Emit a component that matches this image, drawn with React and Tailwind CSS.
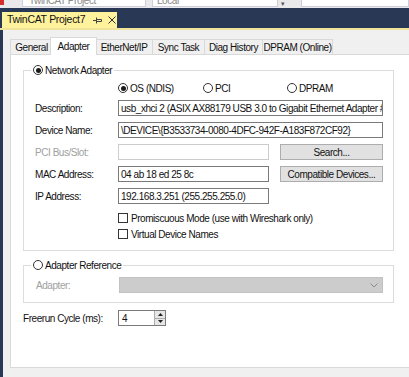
import { useState } from 'react'

const tabs = [
  { name: 'General', w: 'w-[42px]' },
  { name: 'Adapter', w: 'w-[47px]' },
  { name: 'EtherNet/IP', w: 'w-[57px]' },
  { name: 'Sync Task', w: 'w-[52px]' },
  { name: 'Diag History', w: 'w-[58px]' },
  { name: 'DPRAM (Online)', w: 'w-[71px]' },
]

function Radio({ checked }) {
  return (
    <span className="flex h-[10px] w-[10px] shrink-0 items-center justify-center rounded-full border border-[#333] bg-white">
      {checked && <span className="h-[5px] w-[5px] rounded-full bg-[#1a1a1a]" />}
    </span>
  )
}

function Check() {
  return <span className="h-[10px] w-[10px] shrink-0 border border-[#333] bg-white" />
}

function Row({ label, disabled, children }) {
  return (
    <div className="mt-[6px] flex h-[16px] items-center">
      <span className={`w-[83px] shrink-0 ${disabled ? 'text-[#a0a0a0]' : ''}`}>{label}</span>
      {children}
    </div>
  )
}

function TextBox({ value, wide, disabled }) {
  return (
    <div
      className={`flex h-[16px] min-w-0 items-center overflow-hidden whitespace-nowrap border bg-white pl-[2px] ${
        wide ? 'flex-1' : 'w-[151px] shrink-0'
      } ${disabled ? 'border-[#cccccc]' : 'border-[#7a7a7a]'}`}
    >
      {value}
    </div>
  )
}

function Button({ children }) {
  return (
    <button className="ml-auto flex h-[16px] w-[103px] shrink-0 items-center justify-center whitespace-nowrap border border-[#adadad] bg-[#e1e1e1]">
      {children}
    </button>
  )
}

export default function App() {
  const [active, setActive] = useState('Adapter')
  const [mode, setMode] = useState('os')

  return (
    <div className="h-[377px] w-[409px] overflow-hidden bg-[#f0f0f0] font-['Liberation_Sans',Arial,sans-serif] text-[10px] tracking-[-0.45px] text-[#111]">
      {/* toolbar (cut off) */}
      <div className="flex h-[8px] overflow-hidden bg-[#e9e9ec]">
        <div className="h-[5px] w-[4px] shrink-0 bg-[#d4302b]" />
        <div className="ml-[18px] mt-[-10px] flex h-[17px] w-[124px] shrink-0 items-end border border-[#cccedb] bg-white pl-[6px] leading-[11px] text-[#8a8a8a]">
          TwinCAT Project
        </div>
        <div className="ml-[6px] mt-[-10px] flex h-[17px] w-[126px] shrink-0 items-end border border-[#cccedb] bg-white pl-[4px] leading-[11px] text-[#8a8a8a]">
          Local
        </div>
        <div className="ml-[3px] mt-[1px] text-[7px] leading-[6px] text-[#555]">▾</div>
        <div className="ml-[16px] mt-[-10px] h-[17px] flex-1 border border-[#cccedb] bg-white" />
      </div>

      {/* document well */}
      <div className="flex h-[20px] items-end bg-[#293955]">
        <div className="ml-[2px] flex h-[16px] w-[115px] items-center whitespace-nowrap bg-[#fff29d] pl-[5px]">
          <span className="text-[10.5px] tracking-[-0.3px]">TwinCAT Project7</span>
          <svg className="ml-[8px]" width="9" height="7" viewBox="0 0 9 7" fill="none" stroke="#444">
            <path d="M0 3.5H3M3.5 0.5V6.5M3.5 2.5H8.5V4.5H3.5" />
          </svg>
          <svg className="ml-[6px]" width="8" height="8" viewBox="0 0 8 8" fill="none" stroke="#333">
            <path d="M0.5 0.5L7.5 7.5M7.5 0.5L0.5 7.5" />
          </svg>
        </div>
      </div>
      <div className="h-[2px] bg-[#efe49a]" />

      <div className="flex h-[347px]">
        <div className="w-[3px] shrink-0 bg-[#293955]" />
        <div className="flex min-w-0 flex-1 flex-col">
          {/* tabs */}
          <div className="mt-[7px] flex h-[17px] items-end pl-[7px]">
            {tabs.map((t, i) => {
              const sel = t.name === active
              return (
                <button
                  key={t.name}
                  onClick={() => setActive(t.name)}
                  className={`flex shrink-0 items-center justify-center whitespace-nowrap border-[#d9d9d9] ${t.w} ${
                    sel
                      ? 'relative z-10 -mx-[2px] -mb-[1px] h-[18px] border-x border-t bg-white pb-[1px]'
                      : `h-[15px] border-l border-t bg-[#f0f0f0] ${i === tabs.length - 1 ? 'border-r' : ''}`
                  }`}
                >
                  {t.name}
                </button>
              )
            })}
          </div>

          {/* tab page */}
          <div className="ml-[7px] flex h-[314px] flex-col border-y border-l border-[#d9d9d9] bg-white">
            <fieldset className="ml-[12px] mt-[8px] w-[371px] min-w-0 border border-[#dcdcdc] p-0">
              <legend className="ml-[7px] px-[2px]">
                <span className="flex h-[14px] items-center gap-[2px]">
                  <Radio checked />
                  Network Adapter
                </span>
              </legend>
              <div className="pb-[10px] pl-[11px] pr-[10px]">
                <div className="ml-[83px] mt-[5px] flex h-[12px] items-center">
                  {[
                    ['os', 'OS (NDIS)', 'w-[85px]'],
                    ['pci', 'PCI', 'w-[84px]'],
                    ['dpram', 'DPRAM', ''],
                  ].map(([k, label, w]) => (
                    <label key={k} onClick={() => setMode(k)} className={`flex items-center gap-[2px] ${w}`}>
                      <Radio checked={mode === k} />
                      {label}
                    </label>
                  ))}
                </div>
                <div className="mt-[5px]" />
                <Row label="Description:">
                  <TextBox wide value="usb_xhci 2 (ASIX AX88179 USB 3.0 to Gigabit Ethernet Adapter #2)" />
                </Row>
                <Row label="Device Name:">
                  <TextBox wide value="\DEVICE\{B3533734-0080-4DFC-942F-A183F872CF92}" />
                </Row>
                <Row label="PCI Bus/Slot:" disabled>
                  <TextBox disabled value="" />
                  <Button>Search...</Button>
                </Row>
                <Row label="MAC Address:">
                  <TextBox value="04 ab 18 ed 25 8c" />
                  <Button>Compatible Devices...</Button>
                </Row>
                <Row label="IP Address:">
                  <TextBox value="192.168.3.251 (255.255.255.0)" />
                </Row>
                <div className="ml-[83px] mt-[8px] flex h-[12px] items-center gap-[3px]">
                  <Check />
                  Promiscuous Mode (use with Wireshark only)
                </div>
                <div className="ml-[83px] mt-[4px] flex h-[12px] items-center gap-[3px]">
                  <Check />
                  Virtual Device Names
                </div>
              </div>
            </fieldset>

            <fieldset className="ml-[12px] mt-[7px] w-[371px] min-w-0 border border-[#dcdcdc] p-0">
              <legend className="ml-[7px] px-[2px]">
                <span className="flex h-[14px] items-center gap-[2px]">
                  <Radio />
                  Adapter Reference
                </span>
              </legend>
              <div className="pb-[9px] pl-[12px] pr-[10px]">
                <div className="mt-[5px] flex h-[16px] items-center">
                  <span className="w-[83px] shrink-0 text-[#a0a0a0]">Adapter:</span>
                  <div className="flex h-[16px] min-w-0 flex-1 items-center justify-end border border-[#c2c2c2] bg-[#cccccc] pr-[4px]">
                    <svg width="8" height="5" viewBox="0 0 8 5" fill="none" stroke="#8a8a8a">
                      <path d="M0.5 0.5L4 4L7.5 0.5" />
                    </svg>
                  </div>
                </div>
              </div>
            </fieldset>

            <div className="ml-[12px] mt-[7px] flex h-[16px] items-center">
              <span className="w-[95px] shrink-0">Freerun Cycle (ms):</span>
              <div className="flex h-[16px] w-[48px] border border-[#7a7a7a] bg-white">
                <span className="flex flex-1 items-center pl-[3px]">4</span>
                <div className="flex w-[11px] flex-col border-l border-[#adadad]">
                  <span className="flex flex-1 items-center justify-center border-b border-[#adadad] bg-[#e6e6e6]">
                    <svg width="5" height="3" viewBox="0 0 5 3">
                      <path d="M0 3L2.5 0L5 3Z" fill="#222" />
                    </svg>
                  </span>
                  <span className="flex flex-1 items-center justify-center bg-[#e6e6e6]">
                    <svg width="5" height="3" viewBox="0 0 5 3">
                      <path d="M0 0L2.5 3L5 0Z" fill="#222" />
                    </svg>
                  </span>
                </div>
              </div>
            </div>
          </div>
        </div>
      </div>
    </div>
  )
}
